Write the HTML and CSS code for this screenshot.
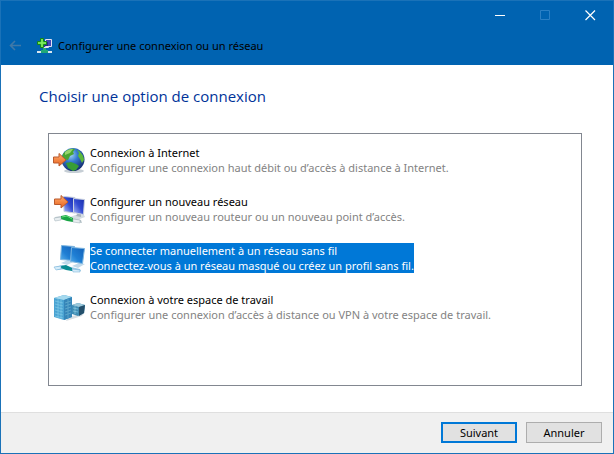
FILE: index.html
```html
<!DOCTYPE html>
<html lang="fr">
<head>
<meta charset="utf-8">
<title>Configurer une connexion ou un réseau</title>
<link rel="stylesheet" href="styles.css">
</head>
<body>
<form class="window">
  <header class="titlebar">
    <div class="window-controls">
      <button type="button" class="control" aria-label="Réduire"><svg width="11" height="11" viewBox="0 0 11 11"><path d="M0 5.500H10" stroke="#fff"/></svg></button>
      <button type="button" class="control" aria-label="Agrandir" disabled><svg width="11" height="11" viewBox="0 0 11 11"><path d="M.5.500h9v9h-9z" fill="none" stroke="#2b80c5"/></svg></button>
      <button type="button" class="control" aria-label="Fermer"><svg width="11" height="11" viewBox="0 0 11 11"><path d="M.5.500l9.500 9.500M10 .5L.5 10" stroke="#fff" stroke-width="1.200"/></svg></button>
    </div>
    <div class="caption">
      <button type="button" class="back" aria-label="Précédent" disabled><svg width="13" height="12" viewBox="0 0 13 12"><path d="M12 5.500H1.500M6 1L1.500 5.500 6 10" fill="none" stroke="#4079a8" stroke-width="1.600"/></svg></button>
      <svg class="caption-icon" width="16" height="16" viewBox="0 0 16 16" aria-hidden="true">
        <path d="M0 13h15v2H0z" fill="#d9e6ee"/>
        <path d="M6 9h3v3h2v3H4v-3h2z" fill="#20a878"/>
        <path d="M5.500 3.500h6v6h-6z" fill="#3032a8" stroke="#e2e2f4"/>
        <path d="M8.500 1.500h6v7h-6z" fill="#4547b4" stroke="#e2e2f4"/>
        <path d="M8 4h3v4H8z" fill="#23248c"/>
        <path d="M3.500.5h3v3h3v3h-3v3h-3v-3h-3v-3h3z" fill="#55d83a" stroke="#13831c"/>
        <path d="M5 1v8M1 5h8" stroke="#8df06a"/>
      </svg>
      <span>Configurer une connexion ou un réseau</span>
    </div>
  </header>

  <main class="page">
    <h1 class="heading">Choisir une option de connexion</h1>
    <div class="options" role="radiogroup" aria-label="Options de connexion">
      <label class="option">
        <input class="choice" type="radio" name="option">
        <svg class="icon" viewBox="0 0 32 32" aria-hidden="true">
          <defs>
            <radialGradient id="sea" cx=".4" cy=".3" r=".75"><stop offset="0" stop-color="#a4d5f6"/><stop offset=".4" stop-color="#367bd0"/><stop offset="1" stop-color="#102568"/></radialGradient>
            <linearGradient id="orange" x2="0" y2="1"><stop offset="0" stop-color="#ffb071"/><stop offset="1" stop-color="#e9611c"/></linearGradient>
          </defs>
          <ellipse cx="21" cy="27" rx="10" ry="2" fill="#c6ced5"/>
          <circle cx="20" cy="15.500" r="11.500" fill="url(#sea)"/>
          <path d="M10 10c3-5 9-6 12-5l-2 3 1 2-4 2-2 4-5-1c-1-2-1-3 0-5z" fill="#4aa532"/>
          <path d="M24 6c4 2 7 6 7 10l-2 3-2-4-2-3 1-3z" fill="#5cb93b"/>
          <path d="M13 19l5-1 5 2 3 2-3 4-3 1-5-3z" fill="#389d35"/>
          <path d="M12 8c2-2 5-3 8-3l-3 4-5 2z" fill="#98d46d"/>
          <path d="M.500 13H6V9.500l7 6.500-7 6V19H.500z" fill="url(#orange)" stroke="#b95a2e"/>
        </svg>
        <span class="text"><span class="name">Connexion à Internet</span><span class="detail">Configurer une connexion haut débit ou d’accès à distance à Internet.</span></span>
      </label>
      <label class="option">
        <input class="choice" type="radio" name="option">
        <svg class="icon" viewBox="0 0 32 32" aria-hidden="true">
          <defs>
            <linearGradient id="navy" x1="1" y1="0" x2="0" y2="1"><stop offset="0" stop-color="#152caa"/><stop offset=".5" stop-color="#334bd2"/><stop offset="1" stop-color="#aebdf7"/></linearGradient>
          </defs>
          <path d="M17 24l8-3 6 1 1 2-8 3z" fill="#d5dde2"/>
          <path d="M25 20l3 1v3l-5-1z" fill="#a9b4bc"/>
          <path d="M10.500 3.500l11.500 1V20l-11-1.500z" fill="url(#navy)" stroke="#c9d1df"/>
          <path d="M20.500 5.500l11 1-1 15-10-2z" fill="url(#navy)" stroke="#c9d1df"/>
          <path d="M2 24l7-1 19 4 1 3-6-1-9-3-11 1z" fill="#b8c5ca"/>
          <path d="M8 23l5-1 7 3v4l-6-1-6-2z" fill="#18a444"/>
          <path d="M9 24l5-1 5 3" fill="none" stroke="#64db79"/>
          <path d="M1 25l7-1v3l-6 1zM20 26l7 1v3l-7-1z" fill="#e8eef0" stroke="#9eafb6" stroke-width=".5"/>
          <path d="M1.500 6H8V2.500l7 6.500-7 6v-3.500H1.500z" fill="url(#orange)" stroke="#b95a2e"/>
        </svg>
        <span class="text"><span class="name">Configurer un nouveau réseau</span><span class="detail">Configurer un nouveau routeur ou un nouveau point d’accès.</span></span>
      </label>
      <label class="option">
        <input class="choice" type="radio" name="option" checked>
        <svg class="icon" viewBox="0 0 32 32" aria-hidden="true">
          <defs>
            <linearGradient id="blue" x1="1" y1="0" x2="0" y2="1"><stop offset="0" stop-color="#1260b9"/><stop offset=".6" stop-color="#1f7fd4"/><stop offset="1" stop-color="#58b0ec"/></linearGradient>
          </defs>
          <path d="M8 21l7-3 5 2-6 3zM19 24l7-3 6 1-7 4z" fill="#c0d9ea"/>
          <path d="M8.500 3.500l13 1-1 14-13-1z" fill="url(#blue)" stroke="#7db6e0"/>
          <path d="M18.500 5.500l13 1-2 15-12-2z" fill="url(#blue)" stroke="#7db6e0"/>
          <path d="M2 25l7-2 18 4 1 2-5 1-9-3-10 1z" fill="#9bc9e6"/>
          <path d="M8 24l5-1 6 3v3l-6-1-5-2z" fill="#088b91"/>
          <path d="M1 25l7-1v3l-5 1zM19 27l8 1v2l-7 0z" fill="#d6edfa" stroke="#68a9d2" stroke-width=".5"/>
        </svg>
        <span class="text"><span class="name">Se connecter manuellement à un réseau sans fil</span><span class="detail">Connectez-vous à un réseau masqué ou créez un profil sans fil.</span></span>
      </label>
      <label class="option">
        <input class="choice" type="radio" name="option">
        <svg class="icon" viewBox="0 0 32 32" aria-hidden="true">
          <path d="M15 26l8-2 9-3-3 4-16 5z" fill="#d6dde2"/>
          <path d="M1 7l10-3 8 2v20L11 29 1 26z" fill="#4aa3d2"/>
          <path d="M1 7l10-3 8 2-8 3z" fill="#a5d9ee"/>
          <path d="M11 9l8-3v20l-8 3z" fill="#3585b8"/>
          <path d="M2 10l8 2M2 13l8 2M2 16l8 2M2 19l8 2M2 22l8 2M2 25l8 2M5 8v19M8 9v19" stroke="#7fcae8" stroke-width=".7"/>
          <path d="M12 12l6-2M12 15l6-2M12 18l6-2M12 21l6-2M12 24l6-2M15 8v19" stroke="#65afd0" stroke-width=".7"/>
          <path d="M19 14l6-2 7 2-1 8-6 3-6-2z" fill="#3f8db4"/>
          <path d="M19 14l6-2 7 2-6 2z" fill="#9bc8da"/>
          <path d="M26 16l6-2-1 8-5 3z" fill="#244f6b"/>
          <path d="M20 17l5 1M20 20l5 1M22 15v8" stroke="#8bcce4" stroke-width=".7"/>
        </svg>
        <span class="text"><span class="name">Connexion à votre espace de travail</span><span class="detail">Configurer une connexion d’accès à distance ou VPN à votre espace de travail.</span></span>
      </label>
    </div>
  </main>

  <footer class="footer">
    <button type="button" class="button primary">Suivant</button>
    <button type="button" class="button">Annuler</button>
  </footer>
</form>
</body>
</html>
```
FILE: styles.css
```css
* { box-sizing: border-box; }

body {
  margin: 0;
  font: 11px/15px "Noto Sans", "Open Sans", sans-serif;
  color: #000;
}

button {
  padding: 0;
  border: 0;
  background: none;
  font: inherit;
  color: inherit;
}

svg { display: block; }

.window {
  display: flex;
  flex-direction: column;
  min-height: 100vh;
  border: 1px solid #1a72b8;
  background: #fff;
}

.titlebar { background: #0063b1; }

.window-controls {
  display: flex;
  justify-content: flex-end;
}

.control {
  display: grid;
  place-items: center;
  width: 45px;
  height: 29px;
}

.caption {
  display: flex;
  align-items: center;
  height: 35px;
  padding: 0 8px 4px;
}

.caption-icon { margin: 0 5px 0 15px; }

.page {
  display: flex;
  flex: 1;
  flex-direction: column;
  padding: 20px 31px 26px 38px;
}

.heading {
  margin: 0 0 26px;
  font: 400 15px/22px "Open Sans", "Noto Sans", sans-serif;
  color: #003399;
}

.options {
  flex: 1;
  margin-left: 9px;
  padding: 10px 4px;
  border: 1px solid #828790;
}

.option {
  display: flex;
  align-items: center;
  gap: 5px;
  height: 32px;
  margin-bottom: 17px;
}

.choice {
  position: absolute;
  opacity: 0;
}

.icon {
  flex: none;
  width: 32px;
  height: 32px;
}

.text { white-space: nowrap; }

.name,
.detail { display: block; }

.detail { color: #838383; }

.choice:checked ~ .text {
  background: #0078d7;
  color: #fff;
}

.choice:checked ~ .text .detail { color: inherit; }

.footer {
  display: flex;
  justify-content: flex-end;
  gap: 9px;
  padding: 9px 11px 10px;
  border-top: 1px solid #dfdfdf;
  background: #f0f0f0;
}

.button {
  width: 76px;
  height: 21px;
  border: 1px solid #adadad;
  background: #e1e1e1;
}

.primary { border: 2px solid #0078d7; }
```
